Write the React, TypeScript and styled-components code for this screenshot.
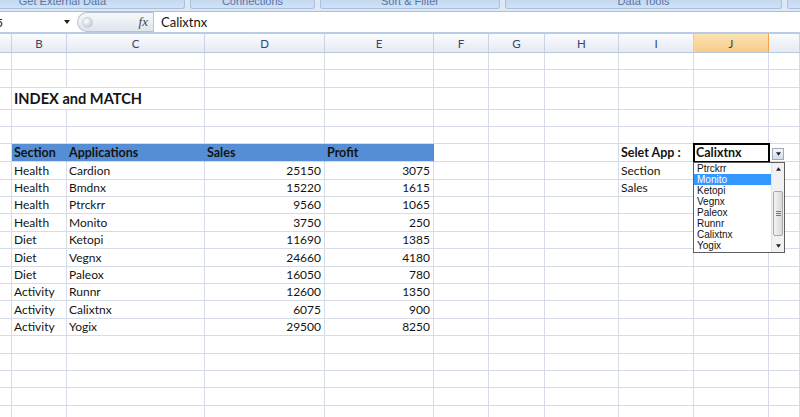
import React from 'react'
import styled, { createGlobalStyle } from 'styled-components'

const GlobalStyle = createGlobalStyle`
    html, body {
        margin: 0;
        padding: 0;
        background: #fff;
    }
    body {
        font-family: Lato, 'Liberation Sans', sans-serif;
    }
`

const COLS = [12, 55, 138, 120, 109, 55, 56, 74, 75, 75, 31]
const HEADS = ['', 'B', 'C', 'D', 'E', 'F', 'G', 'H', 'I', 'J', '']
const ROW_H = [17, 18, 22, 17, 17, 18, 18, 17, 17, 18, 17, 18, 17, 17, 18, 17, 18, 17, 17, 18, 17]
const GRID_COLS = COLS.map(w => `${w}px`).join(' ')
const GRID_LINE = '#d5dce8'
const HEADER_BLUE = '#558ed5'

type CellSpec = {
    text?: string
    right?: boolean
    bold?: boolean
    fill?: boolean
    title?: boolean
    span?: number
    active?: boolean
}

const APPS: [string, string, number, number][] = [
    ['Health', 'Cardion', 25150, 3075],
    ['Health', 'Bmdnx', 15220, 1615],
    ['Health', 'Ptrckrr', 9560, 1065],
    ['Health', 'Monito', 3750, 250],
    ['Diet', 'Ketopi', 11690, 1385],
    ['Diet', 'Vegnx', 24660, 4180],
    ['Diet', 'Paleox', 16050, 780],
    ['Activity', 'Runnr', 12600, 1350],
    ['Activity', 'Calixtnx', 6075, 900],
    ['Activity', 'Yogix', 29500, 8250],
]

const LIST = ['Ptrckrr', 'Monito', 'Ketopi', 'Vegnx', 'Paleox', 'Runnr', 'Calixtnx', 'Yogix']

const blanks = (n: number): CellSpec[] => Array.from({ length: n }, () => ({}))

const buildRows = (): CellSpec[][] => {
    const sideLabels = ['Section', 'Sales']
    const rows: CellSpec[][] = [
        blanks(11),
        blanks(11),
        [{}, { text: 'INDEX and MATCH', title: true, span: 2 }, ...blanks(8)],
        blanks(11),
        blanks(11),
        [
            {},
            { text: 'Section', bold: true, fill: true },
            { text: 'Applications', bold: true, fill: true },
            { text: 'Sales', bold: true, fill: true },
            { text: 'Profit', bold: true, fill: true },
            ...blanks(3),
            { text: 'Selet App :', bold: true },
            { text: 'Calixtnx', bold: true, active: true },
            {},
        ],
    ]
    APPS.forEach(([section, app, sales, profit], i) => {
        rows.push([
            {},
            { text: section },
            { text: app },
            { text: String(sales), right: true },
            { text: String(profit), right: true },
            ...blanks(3),
            { text: sideLabels[i] },
            {},
            {},
        ])
    })
    for (let i = 0; i < 5; i++) rows.push(blanks(11))
    return rows
}

const Screen = styled.div`
    width: 800px;
    height: 417px;
    overflow: hidden;
    background: #fff;
    display: flex;
    flex-direction: column;
`

/* ribbon group captions, cut off at the top like in the screenshot */
const Ribbon = styled.div`
    flex: none;
    height: 11px;
    display: flex;
    gap: 5px;
    margin-left: -60px;
    background: #dde8f5;
    overflow: hidden;
`

const RibbonGroup = styled.div<{ $w: number }>`
    flex: none;
    box-sizing: border-box;
    width: ${p => p.$w}px;
    height: 9px;
    border: 1px solid #a9c0df;
    border-top: none;
    border-radius: 0 0 3px 3px;
    background: linear-gradient(#c4d8f0, #d2e2f5);
    display: flex;
    justify-content: center;
    align-items: flex-end;
    overflow: hidden;
`

const RibbonLabel = styled.span`
    font-family: 'Liberation Sans', sans-serif;
    font-size: 11px;
    line-height: 11px;
    margin-bottom: 1px;
    color: #5575a6;
    white-space: nowrap;
`

const FormulaBar = styled.div`
    flex: none;
    height: 20px;
    display: flex;
    background: #fff;
    border-top: 1px solid #a9bfdc;
    border-bottom: 2px solid #b9cce4;
`

const NameBox = styled.div`
    width: 72px;
    box-sizing: border-box;
    display: flex;
    align-items: center;
    justify-content: space-between;
    padding-right: 2px;
    font-size: 12px;
    color: #111;
    span {
        margin-left: -4px;
    }
`

const FxPill = styled.div`
    width: 76px;
    box-sizing: border-box;
    margin-left: 5px;
    display: flex;
    align-items: center;
    justify-content: space-between;
    padding: 0 5px 0 4px;
    border: 1px solid #b4c3d8;
    border-right: none;
    border-radius: 10px 0 0 10px;
    background: linear-gradient(#f6f8fa, #dfe5ed);
`

const FxDot = styled.span`
    width: 9px;
    height: 9px;
    border-radius: 50%;
    background: radial-gradient(circle at 35% 35%, #fff, #b3bcc7);
    border: 1px solid #c9d1db;
`

const FxLabel = styled.span`
    font-family: 'Liberation Serif', serif;
    font-style: italic;
    font-size: 13px;
    color: #444;
`

const FormulaInput = styled.div`
    flex: 1;
    display: flex;
    align-items: center;
    padding-left: 7px;
    border-left: 1px solid #b4c3d8;
    font-size: 13px;
    color: #111;
`

const HeaderRow = styled.div`
    flex: none;
    display: grid;
    grid-template-columns: ${GRID_COLS};
    height: 18px;
    border-bottom: 1px solid #b7c7dc;
`

const HeaderCell = styled.div<{ $active?: boolean }>`
    box-sizing: border-box;
    display: flex;
    align-items: center;
    justify-content: center;
    font-size: 11.5px;
    color: ${p => (p.$active ? '#4a3a1a' : '#34466a')};
    border-right: 1px solid ${p => (p.$active ? '#f0a446' : '#c8d3e2')};
    background: ${p =>
        p.$active ? 'linear-gradient(#fbe2b4, #f7cc86)' : 'linear-gradient(#fafbfd, #e5eaf2)'};
`

const SheetArea = styled.div`
    position: relative;
    flex: 1;
`

const Sheet = styled.div`
    display: grid;
    grid-template-columns: ${GRID_COLS};
    grid-template-rows: ${ROW_H.map(h => `${h}px`).join(' ')};
`

const Cell = styled.div<{
    $right?: boolean
    $bold?: boolean
    $fill?: boolean
    $title?: boolean
    $span?: number
    $active?: boolean
}>`
    grid-column: span ${p => p.$span ?? 1};
    box-sizing: border-box;
    position: relative;
    display: flex;
    align-items: flex-end;
    justify-content: ${p => (p.$right ? 'flex-end' : 'flex-start')};
    padding: 0 3px 1px 2px;
    white-space: nowrap;
    font-size: ${p => (p.$title ? '14.6px' : p.$bold ? '12.5px' : '12px')};
    line-height: ${p => (p.$title ? '18px' : '14px')};
    font-weight: ${p => (p.$bold || p.$title ? 700 : 400)};
    color: #141414;
    background: ${p => (p.$fill ? HEADER_BLUE : 'transparent')};
    border-right: 1px solid ${p => (p.$fill ? HEADER_BLUE : GRID_LINE)};
    border-bottom: 1px solid ${GRID_LINE};
    ${p => p.$active && 'outline: 2px solid #000; outline-offset: -1px; z-index: 1;'}
`

const DropButton = styled.div`
    position: absolute;
    left: 772px;
    top: 95px;
    width: 12px;
    height: 12px;
    box-sizing: border-box;
    border: 1px solid #9daabb;
    background: linear-gradient(#f4f7fb, #d3dce9);
    display: flex;
    align-items: center;
    justify-content: center;
    z-index: 2;
`

const ListBox = styled.div`
    position: absolute;
    left: 693px;
    top: 109px;
    width: 92px;
    height: 91px;
    box-sizing: border-box;
    border: 1px solid #5e5e5e;
    background: #fff;
    display: flex;
    z-index: 3;
`

const ListItems = styled.div`
    flex: 1;
    overflow: hidden;
`

const ListItem = styled.div<{ $selected?: boolean }>`
    height: 11px;
    line-height: 11px;
    padding-left: 3px;
    font-family: 'Liberation Sans', sans-serif;
    font-size: 10px;
    background: ${p => (p.$selected ? '#3399ff' : 'transparent')};
    color: ${p => (p.$selected ? '#fff' : '#111')};
`

const ScrollBar = styled.div`
    width: 12px;
    display: flex;
    flex-direction: column;
    background: #f1f1f1;
    border-left: 1px solid #e2e2e2;
`

const ScrollArrow = styled.div`
    height: 12px;
    display: flex;
    align-items: center;
    justify-content: center;
`

const ScrollTrack = styled.div`
    flex: 1;
    padding-top: 16px;
`

const ScrollThumb = styled.div`
    height: 45px;
    box-sizing: border-box;
    margin: 0 1px;
    border: 1px solid #a8a8a8;
    border-radius: 2px;
    background: linear-gradient(90deg, #f4f4f4, #d8d8d8);
    display: flex;
    align-items: center;
    justify-content: center;
`

const Grip = styled.div`
    width: 5px;
    height: 5px;
    background: repeating-linear-gradient(#777 0 1px, transparent 1px 2px);
`

const Triangle = ({ up, size = 5 }: { up?: boolean; size?: number }) => (
    <svg width={size} height={Math.ceil(size / 2) + 1} viewBox="0 0 6 4">
        <path d={up ? 'M0 4 L3 0 L6 4 Z' : 'M0 0 L6 0 L3 4 Z'} fill="#222" />
    </svg>
)

const ValidationList = () => (
    <ListBox>
        <ListItems>
            {LIST.map(name => (
                <ListItem key={name} $selected={name === 'Monito'}>
                    {name}
                </ListItem>
            ))}
        </ListItems>
        <ScrollBar>
            <ScrollArrow>
                <Triangle up />
            </ScrollArrow>
            <ScrollTrack>
                <ScrollThumb>
                    <Grip />
                </ScrollThumb>
            </ScrollTrack>
            <ScrollArrow>
                <Triangle />
            </ScrollArrow>
        </ScrollBar>
    </ListBox>
)

const App = () => {
    const rows = buildRows()
    const groups: [string, number][] = [
        ['Get External Data', 245],
        ['Connections', 125],
        ['Sort & Filter', 180],
        ['Data Tools', 277],
        ['', 80],
    ]

    return (
        <Screen>
            <GlobalStyle />
            <Ribbon>
                {groups.map(([label, w], i) => (
                    <RibbonGroup key={i} $w={w}>
                        <RibbonLabel>{label}</RibbonLabel>
                    </RibbonGroup>
                ))}
            </Ribbon>
            <FormulaBar>
                <NameBox>
                    <span>5</span>
                    <Triangle size={6} />
                </NameBox>
                <FxPill>
                    <FxDot />
                    <FxLabel>fx</FxLabel>
                </FxPill>
                <FormulaInput>Calixtnx</FormulaInput>
            </FormulaBar>
            <HeaderRow>
                {HEADS.map((h, i) => (
                    <HeaderCell key={i} $active={h === 'J'}>
                        {h}
                    </HeaderCell>
                ))}
            </HeaderRow>
            <SheetArea>
                <Sheet>
                    {rows.map((row, r) =>
                        row.map((c, ci) => (
                            <Cell
                                key={`${r}-${ci}`}
                                $right={c.right}
                                $bold={c.bold}
                                $fill={c.fill}
                                $title={c.title}
                                $span={c.span}
                                $active={c.active}
                            >
                                {c.text}
                            </Cell>
                        ))
                    )}
                </Sheet>
                <DropButton>
                    <Triangle />
                </DropButton>
                <ValidationList />
            </SheetArea>
        </Screen>
    )
}

export default App
